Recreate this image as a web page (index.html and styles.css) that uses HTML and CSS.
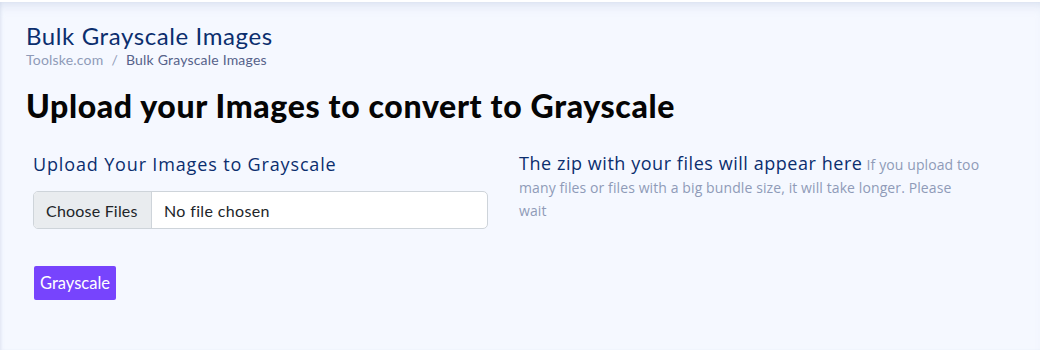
FILE: index.html
```html
<!DOCTYPE html>
<html lang="en">
<head>
<meta charset="utf-8">
<title>Bulk Grayscale Images</title>
<link rel="stylesheet" href="styles.css">
</head>
<body>
<main class="page">
  <header class="page-head">
    <h2 class="page-title">Bulk Grayscale Images</h2>
    <nav class="crumbs"><span class="crumb-root">Toolske.com</span><span class="crumb-sep">/</span><span class="crumb-current">Bulk Grayscale Images</span></nav>
  </header>
  <h1 class="headline">Upload your Images to convert to Grayscale</h1>
  <section class="tool">
    <div class="col-left">
      <h3 class="label">Upload Your Images to Grayscale</h3>
      <div class="file-input"><span class="file-btn">Choose Files</span><span class="file-name">No file chosen</span></div>
      <button class="go" type="button">Grayscale</button>
    </div>
    <div class="col-right">
      <p class="zip"><span class="zip-title">The zip with your files will appear here</span> <span class="zip-note">If you upload too many files or files with a big bundle size, it will take longer. Please wait</span></p>
    </div>
  </section>
</main>
</body>
</html>
```
FILE: styles.css
```css
* { box-sizing: border-box; }
html, body { margin: 0; padding: 0; background: #ffffff; }
body { padding-top: 2px; }
.page {
  width: 1040px;
  height: 348px;
  background: #f5f8ff;
  box-shadow: inset 0 10px 12px -8px rgba(200, 210, 230, 0.7), inset 2px 0 3px -1px rgba(210, 218, 235, 0.6);
  padding: 20px 0 0 26px;
  font-family: "Lato", "Open Sans", sans-serif;
}
.page-head { margin: 0; }
.page-title {
  margin: 0;
  font-family: "Lato", sans-serif;
  font-weight: 400;
  font-size: 24px;
  letter-spacing: 0.6px;
  line-height: 28px;
  color: #0b2e6e;
}
.crumbs {
  margin-top: 1px;
  font-size: 14px;
  letter-spacing: 0.2px;
  line-height: 18px;
  font-family: "Lato", sans-serif;
}
.crumb-root { color: #8f9bb8; }
.crumb-sep { color: #8f9bb8; margin: 0 8px; }
.crumb-current { color: #56628a; }
.headline {
  margin: 17px 0 0 0;
  font-family: "Lato", sans-serif;
  font-weight: 900;
  font-size: 32px;
  letter-spacing: 0.65px;
  line-height: 40px;
  color: #050505;
}
.tool {
  display: grid;
  grid-template-columns: 455px 462px;
  column-gap: 31px;
  margin: 26px 0 0 7px;
}
.label {
  margin: 0;
  font-family: "Open Sans", sans-serif;
  font-weight: 500;
  font-size: 18px;
  letter-spacing: 0.85px;
  line-height: 24px;
  color: #0b2e6e;
}
.file-input {
  display: flex;
  margin-top: 15px;
  height: 38px;
  background: #ffffff;
  border: 1px solid #ced4da;
  border-radius: 5px;
  overflow: hidden;
  font-family: "Lato", sans-serif;
  font-size: 16px;
  color: #212529;
}
.file-btn {
  display: flex;
  align-items: center;
  padding: 0 12px;
  width: 118px;
  letter-spacing: 0.2px;
  background: #e9ecef;
  border-right: 1px solid #ced4da;
}
.file-name { display: flex; align-items: center; padding-left: 12px; letter-spacing: 0.35px; }
.go {
  display: block;
  margin: 37px 0 0 1px;
  height: 34px;
  padding: 0 6px;
  border: none;
  border-radius: 2px;
  background: #7744fd;
  color: #ffffff;
  font-family: "Lato", sans-serif;
  font-size: 16.5px;
}
.zip { margin: 0; line-height: 22px; }
.zip-title {
  font-family: "Open Sans", sans-serif;
  font-weight: 500;
  font-size: 18px;
  line-height: 22px;
  letter-spacing: 0.55px;
  color: #0b2e6e;
}
.zip-note {
  font-family: "Open Sans", sans-serif;
  font-size: 14px;
  line-height: 22px;
  letter-spacing: 0.1px;
  color: #8f9bb8;
}
```
